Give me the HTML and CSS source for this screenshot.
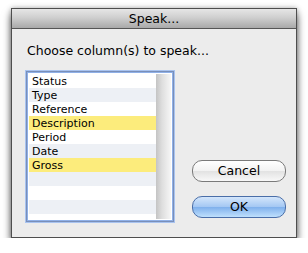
FILE: index.html
```html
<!DOCTYPE html>
<html lang="en">
  <head>
    <meta charset="UTF-8" />
    <title>Speak...</title>
    <link rel="stylesheet" href="styles.css">
  </head>
  <body>
    <div class="window">
      <div class="title-bar">Speak...</div>
      <div class="content">
        <p class="prompt">Choose column(s) to speak...</p>
        <div class="main-row">
          <div class="list-box">
            <ul class="column-list">
              <li>Status</li>
              <li>Type</li>
              <li>Reference</li>
              <li class="selected">Description</li>
              <li>Period</li>
              <li>Date</li>
              <li class="selected">Gross</li>
              <li></li>
              <li></li>
              <li></li>
              <li></li>
            </ul>
            <div class="scroll-track"></div>
          </div>
          <div class="buttons">
            <button class="mac-button" type="button">Cancel</button>
            <button class="mac-button default" type="button">OK</button>
          </div>
        </div>
      </div>
    </div>
  </body>
</html>
```

FILE: styles.css
```css
* {
  box-sizing: border-box;
}
body {
  margin: 0;
  padding: 8px 0 0 11px;
  background: #ffffff;
  font-family: "DejaVu Sans", "Liberation Sans", sans-serif;
}

.window {
  width: 286px;
  height: 230px;
  border: 1px solid #4e4e4e;
  background: #ececec;
  box-shadow: 0 6px 8px rgba(0, 0, 0, 0.6), 0 0 5px rgba(0, 0, 0, 0.3);
  display: flex;
  flex-direction: column;
}

.title-bar {
  height: 20px;
  border-bottom: 1px solid #555555;
  background: linear-gradient(#e6e6e6, #cfcfcf 45%, #a9a9a9);
  text-align: center;
  font-size: 12.5px;
  line-height: 20px;
  color: #000000;
}

.content {
  padding: 14px 10px 0 14px;
}

.prompt {
  margin: 0 0 12px 1px;
  font-size: 12.5px;
  line-height: 16px;
  color: #000000;
}

.main-row {
  display: flex;
  gap: 18px;
}

.list-box {
  width: 149px;
  height: 151px;
  border: 1px solid #7a8fb8;
  box-shadow: 0 0 0 1px #a8c3f0, inset 0 0 0 1px #8fb0e8;
  display: flex;
  padding: 2px;
  background: #ffffff;
}

.column-list {
  list-style: none;
  margin: 0;
  padding: 0;
  flex: 1;
  overflow: hidden;
}

.column-list li {
  height: 14px;
  line-height: 15px;
  padding-left: 3px;
  font-size: 11px;
  color: #000000;
}

.column-list li:nth-child(even) {
  background: #edf0f5;
}

.column-list li.selected {
  background: #fcec7c;
}

.scroll-track {
  width: 15px;
  background: linear-gradient(90deg, #c4c4c4, #dedede 40%, #f6f6f6);
}

.buttons {
  display: flex;
  flex-direction: column;
  justify-content: flex-end;
  gap: 14px;
  padding-bottom: 4px;
}

.mac-button {
  all: unset;
  width: 92px;
  height: 20px;
  border: 1px solid #7a7a7a;
  border-radius: 10px;
  background: linear-gradient(#ffffff, #f2f2f2 50%, #e2e2e2 51%, #f8f8f8);
  text-align: center;
  font-family: "DejaVu Sans", "Liberation Sans", sans-serif;
  font-size: 12.5px;
  line-height: 18px;
  color: #000000;
}

.mac-button.default {
  border-color: #4a6ea8;
  background: linear-gradient(#d4e6fb, #a3c7f3 50%, #7fb0ec 51%, #bfe0fd);
}
```
